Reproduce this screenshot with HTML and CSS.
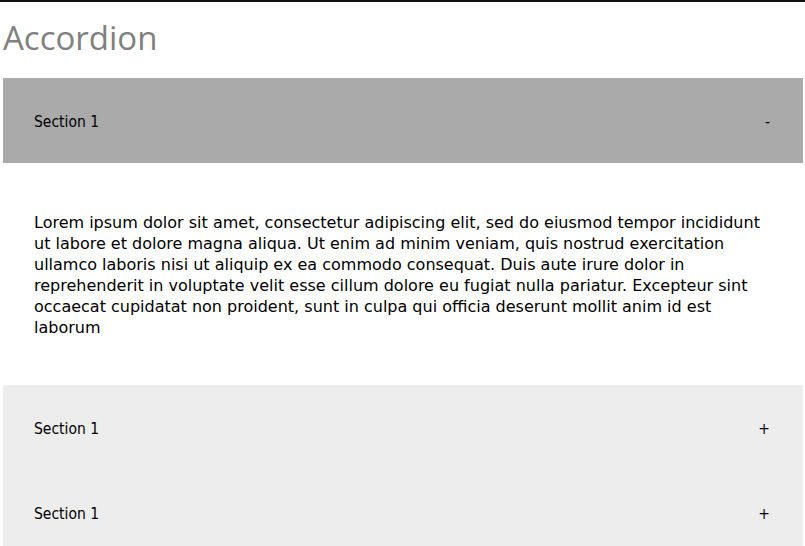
FILE: index.html
```html
<!DOCTYPE html>
<html lang="en">
<head>
<meta charset="utf-8">
<title>Accordion</title>
<link rel="stylesheet" href="styles.css">
</head>
<body>
<div class="page">
  <h1 class="title">Accordion</h1>
  <div class="accordion">
    <div class="acc-item open">
      <div class="acc-header">
        <span class="acc-label">Section 1</span>
        <span class="acc-sign">-</span>
      </div>
      <div class="acc-panel">
        <p class="acc-text">Lorem ipsum dolor sit amet, consectetur adipiscing elit, sed do eiusmod tempor incididunt ut labore et dolore magna aliqua. Ut enim ad minim veniam, quis nostrud exercitation ullamco laboris nisi ut aliquip ex ea commodo consequat. Duis aute irure dolor in reprehenderit in voluptate velit esse cillum dolore eu fugiat nulla pariatur. Excepteur sint occaecat cupidatat non proident, sunt in culpa qui officia deserunt mollit anim id est laborum</p>
      </div>
    </div>
    <div class="acc-item">
      <div class="acc-header">
        <span class="acc-label">Section 1</span>
        <span class="acc-sign">+</span>
      </div>
    </div>
    <div class="acc-item">
      <div class="acc-header">
        <span class="acc-label">Section 1</span>
        <span class="acc-sign">+</span>
      </div>
    </div>
  </div>
</div>
</body>
</html>
```
FILE: styles.css
```css
html, body {
  margin: 0;
  padding: 0;
  background: #ffffff;
}

body {
  border-top: 2px solid #111111;
  font-family: "DejaVu Sans Condensed", "DejaVu Sans", sans-serif;
  color: #000000;
}

.page {
  width: 800px;
  padding-left: 3px;
}

.title {
  margin: 0;
  padding-top: 14px;
  height: 76px;
  box-sizing: border-box;
  font-family: "Open Sans", "Noto Sans", sans-serif;
  font-weight: 400;
  font-size: 33px;
  line-height: 44px;
  color: #808080;
}

.accordion {
  display: flex;
  flex-direction: column;
}

.acc-header {
  display: flex;
  align-items: center;
  justify-content: space-between;
  box-sizing: border-box;
  height: 85px;
  padding: 2px 33px 0 31px;
  background: #ededed;
  font-size: 15.5px;
}

.open .acc-header {
  background: #aaaaaa;
}

.acc-sign {
  width: 12px;
  text-align: right;
}

.acc-panel {
  padding: 49px 31px 47px 31px;
  background: #ffffff;
}

.acc-text {
  margin: 0;
  font-family: "DejaVu Sans", sans-serif;
  font-size: 16px;
  line-height: 21px;
}
```
